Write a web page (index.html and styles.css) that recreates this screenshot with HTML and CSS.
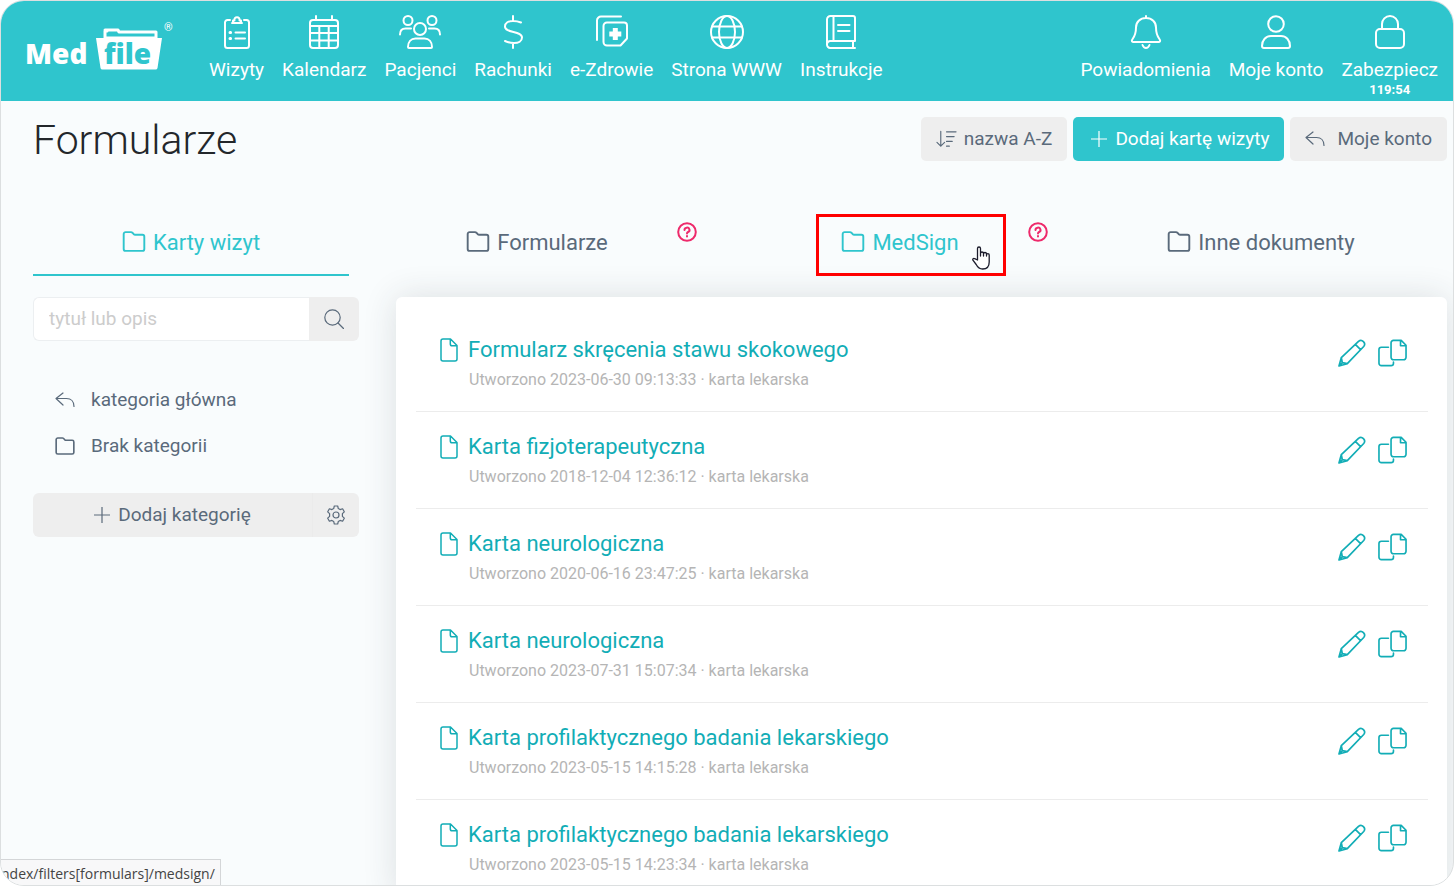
FILE: index.html
```html
<!DOCTYPE html>
<html lang="pl">
<head>
<meta charset="utf-8">
<title>Formularze – MedFile</title>
<link rel="stylesheet" href="styles.css">
</head>
<body>
<svg class="sprite" aria-hidden="true">
  <symbol id="i-folder" viewBox="0 0 24 22"><path d="M1.2 3.2a2 2 0 0 1 2-2h5.600a2 2 0 0 1 1.500.600l1.400 1.500a2 2 0 0 0 1.500.700h7.600a2 2 0 0 1 2 2v12.800a2 2 0 0 1-2 2H3.200a2 2 0 0 1-2-2z"/></symbol>
  <symbol id="i-back" viewBox="0 0 20 16"><path d="M8 1 1 6.500 8 13M1 6.500h10.500c4.500 0 7.500 3 7.500 8"/></symbol>
  <symbol id="i-plus" viewBox="0 0 16 16"><path d="M8 0v16M0 8h16"/></symbol>
  <symbol id="i-file" viewBox="0 0 18 24"><path d="M3 1h7.500L17 7.500V21a2 2 0 0 1-2 2H3a2 2 0 0 1-2-2V3a2 2 0 0 1 2-2zM10.300 1v5a1.800 1.800 0 0 0 1.800 1.800H17"/></symbol>
  <symbol id="i-edit" viewBox="0 0 28 28"><path d="M1 27l2.300-8.300L20.500 2.300a3.700 3.700 0 0 1 5.200 5.200L9.300 24.700zM17.300 5.400l5.300 5.300M3.300 18.700l1 5 5 1M1.200 26.800l3.200-3.200"/></symbol>
  <symbol id="i-copy" viewBox="0 0 30 28"><path d="M16 1h8l5 5v12.500a2.500 2.500 0 0 1-2.500 2.500H16a2.500 2.500 0 0 1-2.500-2.500v-15A2.500 2.500 0 0 1 16 1zM23.300 1v5.500H29M10.800 8H3.500A2.500 2.500 0 0 0 1 10.500v14A2.500 2.500 0 0 0 3.500 27h10a2.500 2.500 0 0 0 2.500-2.500v-1"/></symbol>
  <symbol id="i-help" viewBox="0 0 20 20"><circle cx="10" cy="10" r="8.800"/><path class="mark" d="M7.500 8a2.500 2.300 0 1 1 3.600 2c-.8.400-1.100.700-1.100 1.500M10 13.900v.6"/></symbol>
</svg>
<div class="app">
  <header class="topbar">
    <a class="logo" href="#" aria-label="MedFile">
      <svg viewBox="0 0 150 54" width="150" height="54">
        <text class="logo-text light" x="-1" y="43">Med</text>
        <path class="logo-line" d="M79 17V10h2M79 9h13l1 2h37v6"/>
        <path class="logo-fill" d="M70 17h9v-1.500h50V17h7l-4.500 30a2 2 0 0 1-2 1.500h-53a2 2 0 0 1-2-1.500z"/>
        <text class="logo-text dark" x="78" y="43">file</text>
        <text class="logo-reg" x="138" y="10">®</text>
      </svg>
    </a>
    <nav class="nav">
      <a href="#"><svg viewBox="0 0 34 34"><path d="M10 5H7.500A2.500 2.500 0 0 0 5 7.500v23A2.500 2.500 0 0 0 7.500 33h19a2.500 2.500 0 0 0 2.500-2.500v-23A2.500 2.500 0 0 0 26.500 5H24M12 8h10M13 8V5.500h1.500a2.600 2.600 0 1 1 5 0H21V8M15.500 17.500h9.500M15.500 23.500h9.500"/><path class="thick" d="M10 17.500h.6M10 23.500h.6"/></svg>Wizyty</a>
      <a href="#"><svg viewBox="0 0 34 34"><rect x="3" y="5" width="28" height="28" rx="3"/><path d="M9 1v4M25 1v4M3 11h28M3 18h28M3 25.500h28M12.300 11v22M21.700 11v22"/></svg>Kalendarz</a>
      <a href="#"><svg class="wide" viewBox="0 0 42 34"><circle cx="9" cy="5.500" r="4.500"/><circle cx="33" cy="5.500" r="4.500"/><circle cx="21" cy="14" r="6"/><path d="M9 32c0-5 3-8.500 7.500-8.500h9C30 23.500 33 27 33 32c0 .600-.4 1-1 1H10c-.6 0-1-.4-1-1zM1 19.500c0-4 2-6 5.500-6H12M41 19.500c0-4-2-6-5.500-6H30"/></svg>Pacjenci</a>
      <a href="#"><svg viewBox="0 0 34 34"><path d="M17 1v5M17 28v5M25 7.500C22.500 6.500 19.500 6 17 6c-4.500 0-8 2-8 5.500 0 7 17 4 17 11 0 3.500-3.500 5.500-8 5.500-3.500 0-6.500-.8-9-2"/></svg>Rachunki</a>
      <a href="#"><svg viewBox="0 0 34 34"><path d="M2 25V5.500A4 4 0 0 1 6 1.500h20M12 7.500h17a3 3 0 0 1 3 3v13L25.500 30.500H12a3.500 3.500 0 0 1-3.500-3.500V11A3.500 3.500 0 0 1 12 7.500z"/><path class="cross" d="M20.300 13v12M14.300 19h12"/></svg>e-Zdrowie</a>
      <a href="#"><svg viewBox="0 0 34 34"><circle cx="17" cy="17" r="16"/><ellipse cx="17" cy="17" rx="8" ry="16"/><path d="M2 11.500h30M2 22.500h30"/></svg>Strona WWW</a>
      <a href="#"><svg viewBox="0 0 34 34"><path d="M31 33H6.500A3.300 3.300 0 0 1 3 29.500V4.500A3.500 3.500 0 0 1 6.500 1H29a2 2 0 0 1 2 2v23H6.500A3.300 3.300 0 0 0 3 29.500M9.500 1v25M29 26v7M14 10h11.500M14 16h11.500"/></svg>Instrukcje</a>
    </nav>
    <nav class="nav nav-user">
      <a href="#"><svg viewBox="0 0 34 34"><path d="M17 1v2M17 3c-6 0-10 4-10 9.500 0 6-1 8.500-3.700 12C2.300 26 3 27 4.500 27h25c1.500 0 2.200-1 1.200-2.500C28 21 27 18.500 27 12.500 27 7 23 3 17 3zM13.500 30c.8 2 2 3 3.500 3s2.700-1 3.500-3"/></svg>Powiadomienia</a>
      <a href="#"><svg viewBox="0 0 34 34"><circle cx="17" cy="9" r="7.800"/><path d="M3 31c0-6 4-10 9-10h10c5 0 9 4 9 10 0 1.200-.8 2-2 2H5c-1.200 0-2-.8-2-2z"/></svg>Moje konto</a>
      <a href="#"><svg viewBox="0 0 34 34"><rect x="3" y="14" width="28" height="19" rx="4"/><path d="M9 14V9a8 8 0 0 1 16 0v5"/></svg>Zabezpiecz<small>119:54</small></a>
    </nav>
  </header>

  <main class="page">
    <div class="heading">
      <h1>Formularze</h1>
      <div class="actions">
        <button class="btn sort"><svg class="ico" viewBox="0 0 22 18" width="21" height="18"><path d="M5 1v15.500M1 12.500l4 4 4-4M11 1.500h10M11 6.500h8M11 11.500h6M11 16.500h3"/></svg>nazwa A-Z</button>
        <button class="btn primary"><svg class="ico" width="16" height="16"><use href="#i-plus"/></svg>Dodaj kartę wizyty</button>
        <button class="btn account"><svg class="ico" width="20" height="16"><use href="#i-back"/></svg>Moje konto</button>
      </div>
    </div>

    <nav class="tabs">
      <a class="tab active" href="#"><svg class="ico bold" width="24" height="21"><use href="#i-folder"/></svg>Karty wizyt</a>
      <a class="tab" href="#"><span class="label"><svg class="ico bold" width="24" height="21"><use href="#i-folder"/></svg>Formularze<svg class="help" width="20" height="20"><use href="#i-help"/></svg></span></a>
      <a class="tab hover" href="#"><span class="label"><svg class="ico bold" width="24" height="21"><use href="#i-folder"/></svg>MedSign<svg class="help" width="20" height="20"><use href="#i-help"/></svg><span class="marker"></span><svg class="pointer" viewBox="0 0 18 24" width="18" height="24"><path d="M5.500 14V2.500a1.500 1.500 0 0 1 3 0V10 7.500a1.500 1.500 0 0 1 3 0V10 8a1.500 1.500 0 0 1 3 0v2-1a1.300 1.300 0 0 1 2.700 0v7c0 4.500-2.500 7-6.500 7-3.500 0-5-1.500-6.500-4.500L.900 14.200c-.5-1.200.6-2.200 1.800-1.500z"/></svg></span></a>
      <a class="tab" href="#"><svg class="ico bold" width="24" height="21"><use href="#i-folder"/></svg>Inne dokumenty</a>
    </nav>

    <div class="content">
      <aside class="sidebar">
        <form class="search">
          <input type="text" placeholder="tytuł lub opis" aria-label="tytuł lub opis">
          <button type="button" aria-label="Szukaj"><svg class="ico" viewBox="0 0 20 20" width="20" height="20"><circle cx="8.500" cy="8.500" r="7.700"/><path d="M14 14l5.500 5.500"/></svg></button>
        </form>
        <nav class="categories">
          <a href="#"><svg class="ico" width="20" height="16"><use href="#i-back"/></svg>kategoria główna</a>
          <a href="#"><svg class="ico bold" width="20" height="18"><use href="#i-folder"/></svg>Brak kategorii</a>
        </nav>
        <div class="split">
          <button class="add"><svg class="ico" width="16" height="16"><use href="#i-plus"/></svg>Dodaj kategorię</button>
          <button class="gear" aria-label="Ustawienia"><svg class="ico" viewBox="0 0 20 20" width="20" height="20"><circle cx="10" cy="10" r="3"/><path d="M8.300 1h3.400l.6 2.600 1.800 1 2.500-.8 1.700 3-1.900 1.900v2.600l1.900 1.900-1.700 3-2.500-.8-1.800 1-.6 2.600H8.300l-.6-2.600-1.800-1-2.500.8-1.700-3 1.900-1.900V8.700L1.700 6.800l1.700-3 2.500.8 1.800-1z"/></svg></button>
        </div>
      </aside>

      <ul class="panel">
        <li class="row"><svg class="ico file" width="18" height="24"><use href="#i-file"/></svg><div class="info"><a href="#">Formularz skręcenia stawu skokowego</a><p>Utworzono 2023-06-30 09:13:33 · karta lekarska</p></div><button aria-label="Edytuj"><svg class="ico" width="28" height="28"><use href="#i-edit"/></svg></button><button aria-label="Kopiuj"><svg class="ico" width="29" height="28"><use href="#i-copy"/></svg></button></li>
        <li class="row"><svg class="ico file" width="18" height="24"><use href="#i-file"/></svg><div class="info"><a href="#">Karta fizjoterapeutyczna</a><p>Utworzono 2018-12-04 12:36:12 · karta lekarska</p></div><button aria-label="Edytuj"><svg class="ico" width="28" height="28"><use href="#i-edit"/></svg></button><button aria-label="Kopiuj"><svg class="ico" width="29" height="28"><use href="#i-copy"/></svg></button></li>
        <li class="row"><svg class="ico file" width="18" height="24"><use href="#i-file"/></svg><div class="info"><a href="#">Karta neurologiczna</a><p>Utworzono 2020-06-16 23:47:25 · karta lekarska</p></div><button aria-label="Edytuj"><svg class="ico" width="28" height="28"><use href="#i-edit"/></svg></button><button aria-label="Kopiuj"><svg class="ico" width="29" height="28"><use href="#i-copy"/></svg></button></li>
        <li class="row"><svg class="ico file" width="18" height="24"><use href="#i-file"/></svg><div class="info"><a href="#">Karta neurologiczna</a><p>Utworzono 2023-07-31 15:07:34 · karta lekarska</p></div><button aria-label="Edytuj"><svg class="ico" width="28" height="28"><use href="#i-edit"/></svg></button><button aria-label="Kopiuj"><svg class="ico" width="29" height="28"><use href="#i-copy"/></svg></button></li>
        <li class="row"><svg class="ico file" width="18" height="24"><use href="#i-file"/></svg><div class="info"><a href="#">Karta profilaktycznego badania lekarskiego</a><p>Utworzono 2023-05-15 14:15:28 · karta lekarska</p></div><button aria-label="Edytuj"><svg class="ico" width="28" height="28"><use href="#i-edit"/></svg></button><button aria-label="Kopiuj"><svg class="ico" width="29" height="28"><use href="#i-copy"/></svg></button></li>
        <li class="row"><svg class="ico file" width="18" height="24"><use href="#i-file"/></svg><div class="info"><a href="#">Karta profilaktycznego badania lekarskiego</a><p>Utworzono 2023-05-15 14:23:34 · karta lekarska</p></div><button aria-label="Edytuj"><svg class="ico" width="28" height="28"><use href="#i-edit"/></svg></button><button aria-label="Kopiuj"><svg class="ico" width="29" height="28"><use href="#i-copy"/></svg></button></li>
      </ul>
    </div>
  </main>
  <div class="status">ndex/filters[formulars]/medsign/</div>
</div>
</body>
</html>
```
FILE: styles.css
```css
* { box-sizing: border-box; }
body { margin: 0; background: #fff; color: #5a6a7b; font: 19px/24px Roboto, sans-serif; }
a { color: inherit; text-decoration: none; }
button { font: inherit; color: inherit; border: 0; background: none; padding: 0; cursor: pointer; }
svg { flex: none; fill: none; stroke: currentColor; stroke-width: 2; stroke-linecap: round; stroke-linejoin: round; }
.sprite { display: none; }
.ico { stroke-width: 1.2; }
.bold { stroke-width: 2; }

.app { position: relative; height: 100vh; overflow: hidden; border: 1px solid #dcdfe0; border-radius: 24px; background: #f9fcfd; }

.topbar { display: flex; align-items: flex-start; height: 100px; padding: 14px 15px 0 25px; background: #2fc5cd; color: #fff; }
.logo { width: 183px; padding-top: 6px; }
.logo svg { display: block; overflow: visible; stroke: none; }
.logo-text { font: 800 28px "Open Sans", sans-serif; }
.light { fill: #fff; }
.dark { fill: #2fc5cd; }
.logo-reg { font: 11px Roboto, sans-serif; fill: #fff; }
.logo-fill { fill: #fff; }
.logo-line { fill: none; stroke: #fff; stroke-width: 3; }
.nav { display: flex; gap: 18px; }
.nav a { display: flex; flex-direction: column; align-items: center; }
.nav svg { width: 34px; height: 34px; margin-bottom: 9px; }
.nav .wide { width: 42px; }
.thick { stroke-width: 3; }
.cross { stroke-width: 5; stroke-linecap: butt; }
.nav-user { margin-left: auto; }
.nav small { font: 700 13px/16px Roboto, sans-serif; }

.page { padding: 16px 6px 0 32px; }
.heading { display: flex; justify-content: space-between; align-items: flex-start; }
h1 { margin: 0; font-size: 41px; font-weight: 300; line-height: 46px; color: #23272b; }
.actions { display: flex; gap: 6px; }
.btn { display: flex; align-items: center; height: 44px; padding: 0 15px; border-radius: 5px; background: #eee; }
.sort { gap: 7px; }
.primary { gap: 8px; padding-left: 18px; background: #2fc5cd; color: #fff; }
.account { gap: 12px; }

.tabs { display: grid; grid-template-columns: 316fr 376fr 350fr 372fr; margin-top: 48px; font-size: 22px; }
.tab { display: flex; justify-content: center; align-items: center; gap: 7px; height: 65px; padding-bottom: 2px; }
.tab .bold { margin-bottom: 2px; }
.label { position: relative; display: flex; align-items: center; gap: 7px; }
.active { color: #2fc5cd; border-bottom: 2px solid #2fc5cd; padding-bottom: 0; }
.hover { color: #2fc5cd; }
.help { position: absolute; left: 100%; margin-left: 69px; top: -9px; color: #ee2a6b; }
.mark { stroke-width: 2; }
.marker { position: absolute; left: -25px; right: -47px; top: -17px; height: 62px; border: 3px solid #f00; }
.pointer { position: absolute; left: 100%; margin-left: 13px; top: 15px; fill: #fff; stroke: #1b1b2b; stroke-width: 1.3; }

.content { display: grid; grid-template-columns: 326px 1fr; gap: 37px; margin-top: 21px; align-items: start; }
.search { display: flex; height: 44px; }
.search input { flex: 1; min-width: 0; padding: 0 15px; border: 1px solid #eceff1; border-right: 0; border-radius: 6px 0 0 6px; background: #fff; font: inherit; color: #56677a; }
.search input::placeholder { color: #ccc; opacity: 1; }
.search button { display: grid; place-items: center; width: 50px; border-radius: 0 6px 6px 0; background: #eee; }
.categories { display: grid; gap: 22px; margin: 47px 22px 35px; }
.categories a { display: flex; align-items: center; gap: 16px; }
.split { display: flex; height: 44px; border-radius: 6px; background: #eee; }
.add { display: flex; justify-content: center; align-items: center; gap: 8px; flex: 1; border-right: 1px solid #ebebeb; }
.gear { display: grid; place-items: center; width: 46px; }

.panel { margin: 0; padding: 18px 19px 0 20px; list-style: none; border-radius: 6px; background: #fff; box-shadow: 0 0 34px rgba(40, 50, 60, .14); color: #12adb6; }
.row { display: flex; align-items: flex-start; height: 97px; padding: 23px 21px 0 24px; border-bottom: 1px solid #ececec; }
.file { margin-right: 10px; }
.info { flex: 1; font-size: 22px; line-height: 24px; }
.info p { margin: 6px 0 0 1px; font-size: 16px; color: #b5b5b5; }
.row button { display: flex; margin: 1px 0 0 12px; }
.row button .ico { stroke-width: 1.7; }
.row .file { stroke-width: 1.5; }

.status { position: absolute; left: 0; bottom: 0; height: 26px; padding: 0 5px 0 0; border: 1px solid #d4d6d8; border-width: 1px 1px 0 0; background: #f8f8f9; color: #444; font: 14px/27px "Open Sans", sans-serif; }
```
